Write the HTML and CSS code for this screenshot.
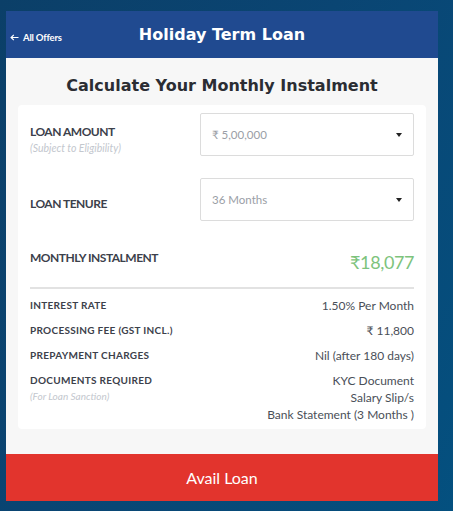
FILE: index.html
```html
<!DOCTYPE html>
<html lang="en">
<head>
  <meta charset="UTF-8">
  <meta name="viewport" content="width=device-width, initial-scale=1.0">
  <title>Holiday Term Loan</title>
  <link rel="stylesheet" href="styles.css">
</head>
<body>
  <div class="modal">
    <div class="modal-header">
      <a href="#" class="back-link">
        <svg width="9" height="7" viewBox="0 0 9 7"><path d="M8.5 3.5H1.2M3.8 0.8L1.1 3.5l2.7 2.7" fill="none" stroke="#fff" stroke-width="1.2"/></svg>
        All Offers
      </a>
      <h1>Holiday Term Loan</h1>
    </div>

    <div class="modal-body">
      <h2>Calculate Your Monthly Instalment</h2>

      <div class="card">
        <div class="form-row">
          <div class="label label-amount">
            LOAN AMOUNT
            <span class="hint">(Subject to Eligibility)</span>
          </div>
          <div class="select">
            <span>₹ 5,00,000</span>
            <span class="caret"></span>
          </div>
        </div>

        <div class="form-row">
          <div class="label label-tenure">LOAN TENURE</div>
          <div class="select">
            <span>36 Months</span>
            <span class="caret"></span>
          </div>
        </div>

        <div class="emi-row">
          <div class="label">MONTHLY INSTALMENT</div>
          <div class="emi-value">₹18,077</div>
        </div>

        <div class="details">
          <div class="detail-row">
            <div class="detail-label">INTEREST RATE</div>
            <div class="detail-value">1.50% Per Month</div>
          </div>
          <div class="detail-row">
            <div class="detail-label">PROCESSING FEE (GST INCL.)</div>
            <div class="detail-value">₹ 11,800</div>
          </div>
          <div class="detail-row">
            <div class="detail-label">PREPAYMENT CHARGES</div>
            <div class="detail-value">Nil (after 180 days)</div>
          </div>
          <div class="detail-row docs">
            <div class="detail-label">
              DOCUMENTS REQUIRED
              <span class="hint">(For Loan Sanction)</span>
            </div>
            <div class="detail-value">
              KYC Document<br>
              Salary Slip/s<br>
              Bank Statement (3 Months )
            </div>
          </div>
        </div>
      </div>
    </div>

    <button class="avail-btn">Avail Loan</button>
  </div>
</body>
</html>
```

FILE: styles.css
```css
body {
  margin: 0;
  padding: 11px 0 0 6px;
  height: 511px;
  box-sizing: border-box;
  font-family: "Lato", "Open Sans", sans-serif;
  background: linear-gradient(120deg, #0b3f68 0%, #0a4573 45%, #04507f 100%);
}
.modal {
  width: 432px;
}
.modal-header {
  height: 47px;
  background: #204a90;
  display: flex;
  align-items: center;
  justify-content: center;
  position: relative;
}
.back-link {
  position: absolute;
  left: 4px;
  top: 21px;
  display: flex;
  align-items: center;
  gap: 4px;
  color: #fff;
  font-size: 9.5px;
  font-weight: bold;
  letter-spacing: -0.2px;
  text-decoration: none;
}
.modal-header h1 {
  margin: 0;
  color: #fff;
  font-family: "DejaVu Sans", sans-serif;
  font-size: 16px;
  font-weight: bold;
}
.modal-body {
  background: #f7f7f7;
  padding: 0 12px 25px;
}
.modal-body h2 {
  margin: 0;
  height: 47px;
  line-height: 55px;
  text-align: center;
  color: #2b2d33;
  font-family: "DejaVu Sans", sans-serif;
  font-size: 16px;
  font-weight: 600;
}
.card {
  background: #fff;
  border-radius: 4px;
  padding: 8px 12px 6px;
}
.form-row {
  display: flex;
  margin-bottom: 22px;
}
.label {
  width: 170px;
  color: #3c414b;
  font-size: 12px;
  font-weight: bold;
  line-height: 15px;
  letter-spacing: -0.5px;
}
.label-amount {
  padding-top: 11px;
}
.label-tenure {
  padding-top: 18px;
}
.hint {
  display: block;
  margin-top: 2px;
  color: #c3c7ce;
  font-size: 10.5px;
  font-weight: normal;
  font-style: italic;
  letter-spacing: 0;
}
.select {
  flex: 1;
  height: 43px;
  box-sizing: border-box;
  border: 1px solid #dcdcdc;
  border-radius: 2px;
  padding: 0 11px;
  display: flex;
  align-items: center;
  justify-content: space-between;
  color: #9a9ea6;
  font-size: 11.5px;
}
.caret {
  width: 0;
  height: 0;
  border-left: 3px solid transparent;
  border-right: 3px solid transparent;
  border-top: 4px solid #222;
}
.emi-row {
  display: flex;
  justify-content: space-between;
  align-items: flex-start;
  padding-top: 7px;
  margin-bottom: 13px;
}
.emi-value {
  color: #7dc37c;
  font-size: 18px;
  line-height: 24px;
  letter-spacing: -0.4px;
}
.details {
  border-top: 2px solid #e2e2e2;
  padding-top: 4px;
}
.detail-row {
  display: flex;
  justify-content: space-between;
  line-height: 25px;
}
.detail-label {
  color: #3c414b;
  font-size: 10px;
  font-weight: bold;
  letter-spacing: 0.3px;
}
.detail-value {
  color: #4a4f58;
  font-size: 12px;
  text-align: right;
}
.docs {
  line-height: 17px;
  padding-top: 4px;
}
.docs .hint {
  margin-top: 0;
  line-height: 15px;
  font-size: 10px;
}
.avail-btn {
  display: block;
  width: 100%;
  height: 47px;
  border: none;
  background: #e2342d;
  color: #fff;
  font-family: "Lato", sans-serif;
  font-size: 16px;
  cursor: pointer;
}
```
